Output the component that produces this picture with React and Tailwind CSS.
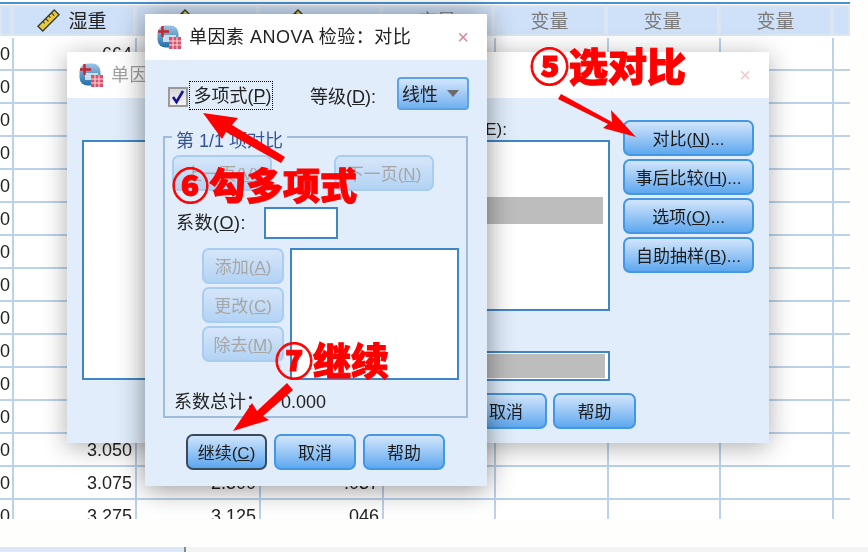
const FONT = '"Liberation Sans", "Noto Sans CJK SC", sans-serif';

const COLS = 'grid grid-cols-[14px_123px_124px_123px_112px_113px_112px_113px_16px]';
const HEAD_COLS = 'grid grid-cols-[12px_123px_123px_123px_112px_113px_113px_113px_18px]';

const rows = Array.from({ length: 15 }, (_, i) => {
    if (i === 0) return ['664', '', ''];
    if (i === 12) return ['3.050', '', ''];
    if (i === 13) return ['3.075', '2.500', '.037'];
    if (i === 14) return ['3.275', '3.125', '046'];
    return ['', '', ''];
});

function SpssIcon({ className }) {
    return (
        <svg viewBox="0 0 24 24" className={className}>
            <defs>
                <linearGradient id="spss" x1="0" y1="0" x2="0" y2="1">
                    <stop offset="0" stopColor="#9cc4e4" />
                    <stop offset="1" stopColor="#1f6fa8" />
                </linearGradient>
            </defs>
            <rect x="0.5" y="0.5" width="21" height="22" rx="8" fill="url(#spss)" />
            <rect x="6" y="10" width="13" height="7" fill="#e6f0f8" opacity="0.8" />
            <path d="M1 6.5h11M5.5 1v11" stroke="#c8242c" strokeWidth="2.4" />
            <rect x="12" y="12" width="12" height="12" fill="#d8506a" />
            <path d="M12 16h12M12 20h12M16 12v12M20 12v12" stroke="#f7d9df" strokeWidth="1" />
        </svg>
    );
}

function Ruler({ className }) {
    return (
        <svg viewBox="0 0 24 24" className={className}>
            <path d="M1 18 18 1l5 5L6 23Z" fill="#e8c83c" stroke="#3a3a2a" strokeWidth="1.4" />
            <path d="M6 13l2 2M9 10l3 3M12 7l2 2M15 4l3 3" stroke="#3a3a2a" strokeWidth="1.2" />
        </svg>
    );
}

function HeaderCell({ children, className = '' }) {
    return (
        <div className={`flex h-[31px] min-w-0 items-center justify-center gap-2 border-2 border-[#dbe6f2] bg-[#cfe1f8] text-[19px] text-[#7a7a7a] ${className}`}>
            {children}
        </div>
    );
}

function Btn({ children, disabled, focus, className = '' }) {
    const look = disabled
        ? 'border-[#a9cdf1] from-[#d6e6f9] to-[#b2d3f4] text-[#a6a6a6]'
        : focus
          ? 'border-[#3a4a5a] from-[#cfe4fb] to-[#5aa6ee] text-[#1c1c1c]'
          : 'border-[#4397e4] from-[#d2e5fb] to-[#5da8ee] text-[#1c1c1c]';
    return (
        <div className={`flex items-center justify-center whitespace-nowrap rounded-[7px] border-2 bg-gradient-to-b pt-[3px] text-[17px] ${look} ${className}`}>
            {children}
        </div>
    );
}

function TitleBar({ title, muted }) {
    return (
        <div className="flex h-[46px] shrink-0 items-center bg-white pl-3 pr-[18px]">
            <SpssIcon className="h-6 w-6 shrink-0" />
            <span className={`ml-2 whitespace-nowrap text-[18px] tracking-[0.5px] ${muted ? 'text-[#a0a0a0]' : 'text-[#222]'}`}>{title}</span>
            <span className={`ml-auto text-[20px] leading-none ${muted ? 'text-[#edc9cf]' : 'text-[#d08a98]'}`}>×</span>
        </div>
    );
}

function Grid() {
    return (
        <div className="h-[519px] w-[850px] overflow-hidden bg-white">
            <div className="mt-[2px] h-[2px] bg-[#4a90d0]" />
            <div className={`${HEAD_COLS} mt-[1px] h-[31px] bg-white`}>
                <HeaderCell />
                <HeaderCell className="pr-[3px] text-[#222]">
                    <Ruler className="h-[23px] w-[23px]" />
                    <span className="pt-[3px]">湿重</span>
                </HeaderCell>
                <HeaderCell><Ruler className="mr-[36px] h-6 w-6" /></HeaderCell>
                <HeaderCell><Ruler className="mr-[56px] h-6 w-6" /></HeaderCell>
                <HeaderCell className="pt-[3px]">变量</HeaderCell>
                <HeaderCell className="pt-[3px]">变量</HeaderCell>
                <HeaderCell className="pt-[3px]">变量</HeaderCell>
                <HeaderCell className="pt-[3px]">变量</HeaderCell>
                <HeaderCell />
            </div>
            <div className="mt-[2px]">
                {rows.map((r, i) => (
                    <div key={i} className={`${COLS} h-[33px] border-b-2 border-[#bad2ea] text-[18px] text-[#222]`}>
                        <div className="flex items-center justify-end overflow-hidden border-r-2 border-[#bad2ea] pr-[2px] pt-[2px]">0</div>
                        <div className="flex items-center justify-end border-r-2 border-[#bad2ea] pr-[3px] pt-[2px]">{r[0]}</div>
                        <div className="flex items-center justify-end border-r-2 border-[#bad2ea] pr-[3px] pt-[2px]">{r[1]}</div>
                        <div className="flex items-center justify-end border-r-2 border-[#bad2ea] pr-[3px] pt-[2px]">{r[2]}</div>
                        <div className="border-r-2 border-[#bad2ea]" />
                        <div className="border-r-2 border-[#bad2ea]" />
                        <div className="border-r-2 border-[#bad2ea]" />
                        <div className="border-r-2 border-[#bad2ea]" />
                        <div />
                    </div>
                ))}
            </div>
        </div>
    );
}

function BackDialog() {
    return (
        <div className="absolute left-[67px] top-[52px] flex h-[391px] w-[702px] flex-col bg-[#e1edfb] shadow-[0_4px_24px_rgba(0,0,0,0.32)]">
            <TitleBar title="单因素 ANOVA 检验" muted />
            <div className="flex pl-[15px] pt-[22px]">
                <div className="mt-[20px] h-[240px] w-[200px] border-2 border-[#3f86c9] bg-white" />
                <div className="ml-[118px] flex w-[210px] flex-col">
                    <div className="flex h-[20px] items-center justify-end pr-[103px] text-[17px] text-[#222]">(E):</div>
                    <div className="h-[171px] border-2 border-[#3f86c9] bg-white pr-[5px] pt-[55px]">
                        <div className="h-[27px] bg-[#bdbdbd]" />
                    </div>
                    <div className="mt-[40px] h-[30px] border-2 border-[#3f86c9] bg-white p-[1px] pr-[3px]">
                        <div className="h-full bg-[#bdbdbd]" />
                    </div>
                </div>
                <div className="ml-[13px] flex w-[131px] flex-col gap-[3px]">
                    <Btn className="h-[36px]"><span>对比(<u>N</u>)...</span></Btn>
                    <Btn className="h-[36px]"><span>事后比较(<u>H</u>)...</span></Btn>
                    <Btn className="h-[36px]"><span>选项(<u>O</u>)...</span></Btn>
                    <Btn className="h-[36px]"><span>自助抽样(<u>B</u>)...</span></Btn>
                </div>
            </div>
            <div className="mt-[12px] flex justify-end gap-[6px] pr-[133px]">
                <Btn className="h-[36px] w-[82px]">取消</Btn>
                <Btn className="h-[36px] w-[83px]">帮助</Btn>
            </div>
        </div>
    );
}

function FrontDialog() {
    return (
        <div className="absolute left-[145px] top-[14px] flex h-[472px] w-[342px] flex-col bg-[#e1edfb] shadow-[0_2px_26px_rgba(0,0,0,0.45)]">
            <TitleBar title="单因素 ANOVA 检验：对比" />
            <div className="mt-[17px] flex h-[33px] items-center pl-[23px] text-[18px] text-[#222]">
                <div className="mt-[6px] flex h-[20px] w-[20px] items-center justify-center border-2 border-[#9a9a9a] bg-gradient-to-b from-[#d8d8d8] to-[#f4f4f4]">
                    <svg viewBox="0 0 16 16" className="h-4 w-4">
                        <path d="M3 8l3.5 5L13 2" fill="none" stroke="#15159a" strokeWidth="2.6" />
                    </svg>
                </div>
                <div className="ml-[1px] mt-[4px] flex h-[29px] w-[84px] items-center justify-center border border-dotted border-black pl-[3px] pt-[2px]">
                    <span>多项式(<u>P</u>)</span>
                </div>
                <span className="ml-[37px] mt-[8px] w-[68px] whitespace-nowrap">等级(<u>D</u>):</span>
                <div className="ml-[19px] flex h-[33px] w-[72px] items-center rounded-[4px] border-2 border-[#5ba3e6] bg-gradient-to-b from-[#d4e6fb] to-[#70b0ee] pl-[3px]">
                    <span className="mt-[4px]">线性</span>
                    <span className="ml-[9px] h-0 w-0 border-x-[6px] border-t-[7px] border-x-transparent border-t-[#6c6c6c]" />
                </div>
            </div>
            <div className="relative ml-[18px] mt-[26px] h-[282px] w-[305px] border-2 border-[#9fbcdc] px-[7px] pt-[17px]">
                <span className="absolute left-[7px] top-[-7px] bg-[#e1edfb] px-[4px] text-[18px] leading-[20px] text-[#33559a]">第 1/1 项对比</span>
                <div className="flex justify-between pr-[25px]">
                    <Btn disabled className="h-[36px] w-[100px]"><span>上一页(<u>V</u>)</span></Btn>
                    <Btn disabled className="h-[36px] w-[100px]"><span>下一页(<u>N</u>)</span></Btn>
                </div>
                <div className="mt-[16px] flex h-[32px] items-center pl-[4px] text-[18px] text-[#222]">
                    <span className="w-[88px] tracking-[0.5px]">系数(<u>O</u>):</span>
                    <div className="h-[32px] w-[74px] border-2 border-[#3f86c9] bg-white" />
                </div>
                <div className="mt-[9px] flex pl-[30px]">
                    <div className="flex w-[83px] flex-col gap-[3px]">
                        <Btn disabled className="h-[36px]"><span>添加(<u>A</u>)</span></Btn>
                        <Btn disabled className="h-[36px]"><span>更改(<u>C</u>)</span></Btn>
                        <Btn disabled className="h-[36px]"><span>除去(<u>M</u>)</span></Btn>
                    </div>
                    <div className="ml-[6px] h-[132px] w-[170px] border-2 border-[#3f86c9] bg-white" />
                </div>
                <div className="mt-[9px] flex items-center pl-[2px] text-[18px] text-[#222]">
                    <span className="w-[107px] whitespace-nowrap">系数总计：</span>
                    <span>0.000</span>
                </div>
            </div>
            <div className="ml-[41px] mt-[16px] flex gap-[7px]">
                <Btn focus className="h-[36px] w-[81px]"><span>继续(<u>C</u>)</span></Btn>
                <Btn className="h-[36px] w-[82px]">取消</Btn>
                <Btn className="h-[36px] w-[82px]">帮助</Btn>
            </div>
        </div>
    );
}

function Note({ children, className }) {
    return (
        <div className={`absolute whitespace-nowrap font-black leading-none text-[#ff0000] [-webkit-text-stroke:1px_#ff0000] ${className}`}>
            {children}
        </div>
    );
}

function Notes() {
    return (
        <>
            <svg viewBox="0 0 868 552" className="absolute left-0 top-0 h-[552px] w-[868px]">
                <path d="M558 99 561 94 612 122 611 110 636 137 603 128 608 124Z" fill="#ff0000" />
                <path d="M203 113 238 118 232 125 285 157 281 163 226 132 222 139Z" fill="#ff0000" />
                <path d="M233 431 252 403 257 411 287 383 293 390 263 416 269 420Z" fill="#ff0000" />
            </svg>
            <Note className="left-[530px] top-[48px] text-[39px]">⑤选对比</Note>
            <Note className="left-[172px] top-[169px] text-[37px]">⑥勾多项式</Note>
            <Note className="left-[275px] top-[343px] text-[38px]">⑦继续</Note>
        </>
    );
}

export default function App() {
    return (
        <div className="relative h-[552px] w-[868px] overflow-hidden bg-[#fefefc] blur-[0.4px]" style={{ fontFamily: FONT }}>
            <Grid />
            <div className="mt-[28px] flex h-[5px]">
                <div className="w-[184px] bg-[#dce8f5]" />
                <div className="flex-1 border-l-2 border-[#8a8a8a] bg-[#f3f3f3]" />
            </div>
            <BackDialog />
            <FrontDialog />
            <Notes />
        </div>
    );
}
